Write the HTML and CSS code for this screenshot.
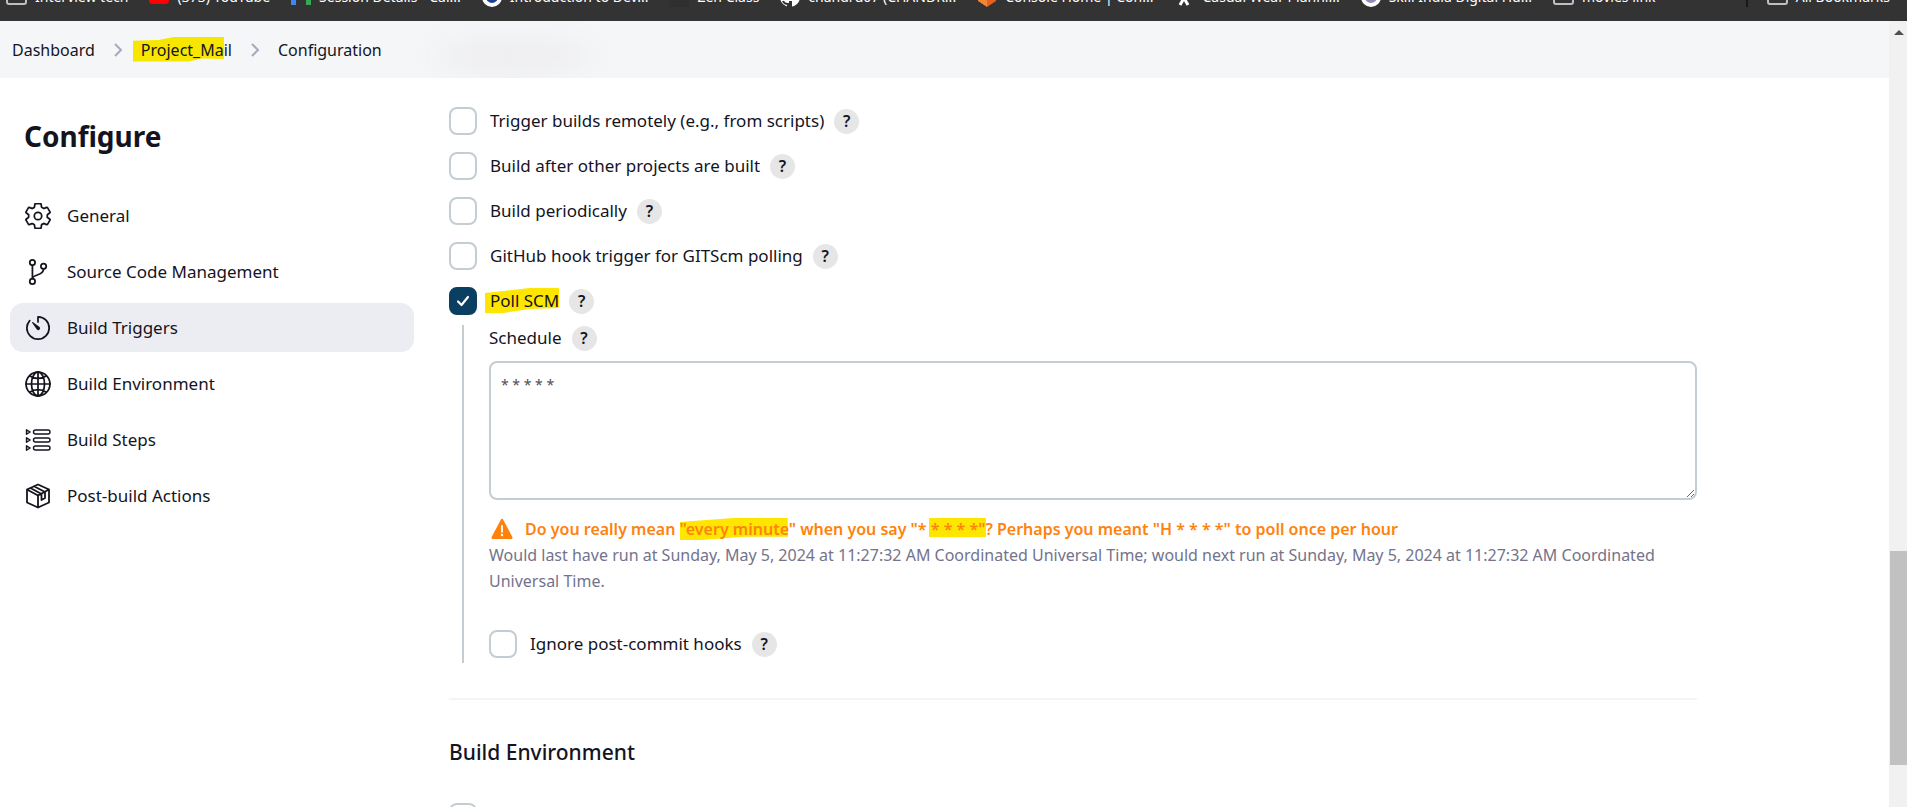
FILE: index.html
```html
<!DOCTYPE html>
<html lang="en">
<head>
<meta charset="utf-8">
<title>Project_Mail Config [Jenkins]</title>
<link rel="stylesheet" href="styles.css">
</head>
<body>
<nav class="bookmarks" aria-label="Bookmarks">
  <a class="bookmark" href="#"><span class="folder"></span>Interview tech</a>
  <a class="bookmark" href="#"><span class="fav fav-youtube"></span>(373) YouTube</a>
  <a class="bookmark" href="#"><span class="fav fav-meet"></span>Session Details - Cal...</a>
  <a class="bookmark" href="#"><span class="fav fav-round"></span>Introduction to Dev...</a>
  <a class="bookmark" href="#"><span class="fav fav-dark"></span>Zen Class</a>
  <a class="bookmark" href="#"><svg class="fav" viewBox="0 0 20 20"><circle cx="10" cy="10" r="10" fill="#fff"/><path d="M8 20v-3q-4 0-5-3" fill="none" stroke="#333" stroke-width="2"/><path d="M9 14h3v6h-3z" fill="#333"/></svg>chandru07 (CHANDR...</a>
  <a class="bookmark" href="#"><svg class="fav" viewBox="0 0 20 20"><path d="M1 5l9-5v20l-9-6z" fill="#f58536"/><path d="M19 5l-9-5v20l9-6z" fill="#e8601f"/></svg>Console Home | Con...</a>
  <a class="bookmark" href="#"><svg class="fav" viewBox="0 0 20 20"><path d="M6 18l4-7 4 7" fill="none" stroke="#fff" stroke-width="3"/></svg>Casual Wear Planni...</a>
  <a class="bookmark" href="#"><span class="fav fav-round fav-india"></span>Skill India Digital Hu...</a>
  <a class="bookmark" href="#"><span class="folder"></span>movies link</a>
  <a class="bookmark bookmark-all" href="#"><span class="folder"></span>All Bookmarks</a>
</nav>
<div class="viewport">
  <div class="page">
    <header class="crumbs">
      <a href="#">Dashboard</a>
      <svg class="chevron" viewBox="0 0 8 14"><path d="M1 1l6 6-6 6"/></svg>
      <a href="#" class="marked mark-project">Project_Mail</a>
      <svg class="chevron" viewBox="0 0 8 14"><path d="M1 1l6 6-6 6"/></svg>
      <span>Configuration</span>
      <span class="smudge"></span>
    </header>
    <div class="columns">
      <aside class="side">
        <h1>Configure</h1>
        <nav class="tasks" aria-label="Configure">
          <a class="task" href="#"><svg class="icon" viewBox="32 32 448 448"><circle cx="256" cy="256" r="64"/><path d="M416.39 256a154.34 154.34 0 01-1.53 20.79l45.21 35.46a10.81 10.81 0 012.45 13.75l-42.77 74a10.81 10.81 0 01-13.14 4.59l-44.9-18.08a16.11 16.11 0 00-15.17 1.75A164.48 164.48 0 01325 400.8a15.94 15.94 0 00-8.82 12.14l-6.73 47.89a11.08 11.08 0 01-10.68 9.17h-85.54a11.11 11.11 0 01-10.69-8.87l-6.72-47.82a16.07 16.07 0 00-9-12.22 155.3 155.3 0 01-21.46-12.57 16 16 0 00-15.11-1.71l-44.89 18.07a10.81 10.81 0 01-13.14-4.58l-42.77-74a10.8 10.8 0 012.45-13.75l38.21-30a16.05 16.05 0 006-14.08c-.36-4.17-.58-8.33-.58-12.5s.21-8.27.58-12.35a16 16 0 00-6.07-13.94l-38.19-30A10.81 10.81 0 0149.48 186l42.77-74a10.81 10.81 0 0113.14-4.59l44.9 18.08a16.11 16.11 0 0015.17-1.75A164.48 164.48 0 01187 111.2a15.94 15.94 0 008.82-12.14l6.73-47.89A11.08 11.08 0 01213.23 42h85.54a11.11 11.11 0 0110.69 8.87l6.72 47.82a16.07 16.07 0 009 12.22 155.3 155.3 0 0121.46 12.57 16 16 0 0015.11 1.71l44.89-18.07a10.81 10.81 0 0113.14 4.58l42.77 74a10.8 10.8 0 01-2.45 13.75l-38.21 30a16.05 16.05 0 00-6.05 14.08c.33 4.14.55 8.3.55 12.47z"/></svg>General</a>
          <a class="task" href="#"><svg class="icon" viewBox="32 32 448 448"><circle cx="160" cy="94" r="46"/><circle cx="160" cy="418" r="46"/><circle cx="352" cy="158" r="46"/><path d="M160 140v232M352 204c0 128-192 80-192 168"/></svg>Source Code Management</a>
          <a class="task task-active" href="#" aria-current="page"><svg class="icon" viewBox="32 32 448 448"><path d="M112.91 128A191.85 191.85 0 0064 254c-1.18 106.35 85.65 193.8 192 194 106.2.2 192-85.83 192-192 0-104.54-83.55-189.61-187.5-192a4.36 4.36 0 00-4.5 4.37V152"/><path class="solid" d="M233.38 278.63l-79-113a8.13 8.13 0 0111.32-11.32l113 79a32.5 32.5 0 01-37.25 53.26 33.21 33.21 0 01-8.07-7.94z"/></svg>Build Triggers</a>
          <a class="task" href="#"><svg class="icon" viewBox="32 32 448 448"><circle cx="256" cy="256" r="206"/><path d="M256 48c-58.07 0-112.67 93.13-112.67 208S197.93 464 256 464s112.67-93.13 112.67-208S314.07 48 256 48zM117.33 117.33c38.24 27.15 86.38 43.34 138.67 43.34s100.43-16.19 138.67-43.34M394.67 394.67c-38.24-27.15-86.38-43.34-138.67-43.34s-100.43 16.19-138.67 43.34M256 48v416M464 256H48"/></svg>Build Environment</a>
          <a class="task" href="#"><svg class="icon icon-fine" viewBox="0 0 26 26"><rect x="8.500" y="3" width="16.500" height="4" rx="2"/><rect x="8.500" y="11" width="16.500" height="4" rx="2"/><rect x="8.500" y="19" width="16.500" height="4" rx="2"/><path d="M1.500 2.800v4.400l3.700-2.200zM1.500 10.800v4.400l3.700-2.200zM1.500 18.800v4.400l3.700-2.200z"/></svg>Build Steps</a>
          <a class="task" href="#"><svg class="icon icon-box" viewBox="0 0 26 26"><path d="M13 1.500l11 5v13l-11 5-11-5v-13zM2 6.500l11 6 11-6M13 12.500v12M5.500 5l11 6M9 3.300l11 5.700M16.500 11v6l3.500-2v-6"/></svg>Post-build Actions</a>
        </nav>
      </aside>
      <main class="main">
        <form class="form">
          <div class="options">
            <div class="row"><input class="check" type="checkbox" id="remote"><label for="remote">Trigger builds remotely (e.g., from scripts)</label><button class="help" type="button">?</button></div>
            <div class="row"><input class="check" type="checkbox" id="after"><label for="after">Build after other projects are built</label><button class="help" type="button">?</button></div>
            <div class="row"><input class="check" type="checkbox" id="periodic"><label for="periodic">Build periodically</label><button class="help" type="button">?</button></div>
            <div class="row"><input class="check" type="checkbox" id="hook"><label for="hook">GitHub hook trigger for GITScm polling</label><button class="help" type="button">?</button></div>
            <div class="row"><input class="check" type="checkbox" id="poll" checked><label for="poll" class="marked mark-poll">Poll SCM</label><button class="help" type="button">?</button></div>
          </div>
          <div class="nested">
            <div class="field-head"><label for="schedule">Schedule</label><button class="help" type="button">?</button></div>
            <textarea class="schedule" id="schedule">* * * * *</textarea>
            <p class="warning"><svg class="warn-icon" viewBox="0 0 24 24"><path d="M12 2.500L22 21.500H2z" fill="#ff820d" stroke="#ff820d" stroke-width="3" stroke-linejoin="round"/><path d="M12 8.500v6.500" stroke="#fff" stroke-width="2" stroke-linecap="round"/><circle cx="12" cy="18.500" r="1.300" fill="#fff"/></svg><span>Do you really mean <span class="marked mark-minute">"every minute</span>" when you say "* <span class="marked mark-stars">* * * *"</span>? Perhaps you meant "H * * * *" to poll once per hour</span></p>
            <p class="detail">Would last have run at Sunday, May 5, 2024 at 11:27:32 AM Coordinated Universal Time; would next run at Sunday, May 5, 2024 at 11:27:32 AM Coordinated Universal Time.</p>
            <div class="row"><input class="check" type="checkbox" id="ignore"><label for="ignore">Ignore post-commit hooks</label><button class="help" type="button">?</button></div>
          </div>
          <section class="section">
            <h2>Build Environment</h2>
            <div class="row"><input class="check" type="checkbox" aria-label="Build Environment option"></div>
          </section>
        </form>
      </main>
    </div>
  </div>
  <div class="scrollbar" aria-hidden="true"><div class="arrow"></div><div class="thumb"></div></div>
</div>
</body>
</html>
```
FILE: styles.css
```css
* { box-sizing: border-box; }
body {
  margin: 0;
  height: 100vh;
  overflow: hidden;
  display: flex;
  flex-direction: column;
  background: #fff;
  color: #14141f;
  font: 17px/26px "Noto Sans", "Open Sans", sans-serif;
}
a { color: inherit; text-decoration: none; }
h1, h2, p { margin: 0; }

/* Browser bookmarks strip, cut off at the top of the window */
.bookmarks {
  flex: none;
  height: 21px;
  overflow: hidden;
  display: flex;
  align-items: flex-end;
  gap: 21px;
  padding: 0 17px 14px 6px;
  background: #333;
  color: #fff;
  font-size: 14px;
  line-height: 20px;
}
.bookmark { display: flex; align-items: center; gap: 8px; white-space: nowrap; height: 20px; flex: none; }
.bookmark-all { margin-left: auto; }
.bookmark-all::before { content: ""; width: 2px; height: 20px; background: #181818; margin-right: 11px; }
.folder { width: 21px; height: 16px; border: 2px solid #c3bdc3; border-radius: 3px; }
.fav { width: 20px; height: 20px; flex: none; }
.fav-youtube { background: #f00; height: 14px; border-radius: 4px; }
.fav-meet { border: solid; border-width: 0 5px; border-color: #333 #34a853 #333 #4285f4; height: 16px; }
.fav-round { border-radius: 50%; background: #1d3f9c; border: 4px solid #fff; }
.fav-india { background: #8c8cb4; }
.fav-dark { background: #2f2f2f; }

.viewport { flex: 1; min-height: 0; display: flex; }
.page { flex: 1; min-width: 0; overflow: hidden; }

.crumbs {
  display: flex;
  align-items: center;
  height: 57px;
  overflow: hidden;
  padding: 0 12px;
  gap: 18px;
  background: #f5f6f8;
  font-size: 16px;
}
.chevron { width: 10px; height: 14px; fill: none; stroke: #a9a9bd; stroke-width: 2; }
.smudge { width: 150px; height: 36px; margin: 12px 0 0 38px; border-radius: 50%; background: #eeeef0; filter: blur(12px); }

/* Highlighter strokes lying behind words */
.marked { position: relative; z-index: 0; }
.marked::before { content: ""; position: absolute; z-index: -1; background: #ffe600; }
.mark-project::before { inset: 0 8px 1px -8px; clip-path: polygon(0 17%, 28% 14%, 45% 2%, 100% 0, 100% 90%, 75% 88%, 62% 100%, 0 100%); background: #f7e600; }
.mark-poll::before { inset: 0 0 1px -5px; clip-path: polygon(0 20%, 60% 0, 100% 0, 100% 80%, 60% 84%, 25% 100%, 0 100%); }
.mark-minute::before { inset: 0 1px 0 0; clip-path: polygon(0 18%, 50% 0, 100% 0, 100% 85%, 60% 85%, 20% 100%, 0 100%); }
.mark-stars::before { inset: 0 -1px 3px -2px; }

.columns { display: flex; gap: 35px; }
.side { flex: none; width: 414px; padding: 36px 0 0 10px; }
h1 { padding-left: 14px; font-size: 28px; line-height: 44px; font-weight: 700; }
.tasks { display: flex; flex-direction: column; gap: 7px; margin-top: 33px; }
.task { display: flex; align-items: center; gap: 16px; height: 49px; padding: 0 15px; border-radius: 13px; }
.task-active { background: #ecedf3; }
.icon { width: 26px; height: 26px; flex: none; fill: none; stroke: currentColor; stroke-width: 30; stroke-linecap: round; stroke-linejoin: round; }
.icon .solid { fill: currentColor; stroke: none; }
.icon-fine { stroke-width: 1.4; }
.icon-box { stroke-width: 1.8; }

.main { flex: 1; min-width: 0; padding: 29px 0 0; }
.form { max-width: 1248px; }
.options { display: flex; flex-direction: column; gap: 17px; }
.row { display: flex; align-items: center; height: 28px; }
.row label { margin-left: 13px; }
.check {
  appearance: none;
  flex: none;
  width: 28px;
  height: 28px;
  margin: 0;
  border: 2px solid #c3cdd2;
  border-radius: 8px;
  background: #fff;
}
.check:checked {
  border-color: #0b3f61;
  background: #0b3f61 url("data:image/svg+xml,%3Csvg xmlns='http://www.w3.org/2000/svg' viewBox='0 0 24 24'%3E%3Cpath d='M7 12.500l3.500 3.500 6.500-8' fill='none' stroke='white' stroke-width='2.200' stroke-linecap='round' stroke-linejoin='round'/%3E%3C/svg%3E") center / 24px no-repeat;
}
.help {
  flex: none;
  width: 25px;
  height: 25px;
  margin: 0 0 0 10px;
  padding: 0;
  border: 0;
  border-radius: 50%;
  background: #e6e6e6;
  color: #14141f;
  font: 600 16px/25px "Noto Sans", sans-serif;
}
.nested { margin: 10px 0 0 13px; padding: 0 0 5px 25px; border-left: 2px solid #c3cdd2; }
.field-head { display: flex; align-items: center; height: 26px; }
.schedule {
  display: block;
  width: 100%;
  height: 139px;
  margin: 10px 0 0;
  padding: 9px 10px;
  border: 2px solid #c3cdd2;
  border-radius: 8px;
  background: #fff;
  color: #4d4d57;
  font: 14px/26px "Noto Sans", sans-serif;
  resize: vertical;
}
.warning { display: flex; align-items: center; gap: 12px; margin-top: 16px; padding-left: 2px; color: #ff820d; font-size: 16px; font-weight: 600; }
.warn-icon { flex: none; width: 22px; height: 22px; }
.detail { color: #73738c; font-size: 16px; }
.nested .row { margin-top: 36px; }
.section { margin-top: 35px; border-top: 2px solid #f3f3f8; }
h2 { margin: 37px 0 36px; font-size: 21px; line-height: 30px; font-weight: 500; }

.scrollbar { flex: none; width: 18px; display: flex; flex-direction: column; align-items: center; background: #f1f1f1; padding: 9px 0 0 1px; }
.arrow { border: solid transparent; border-width: 0 5px 5px; border-bottom-color: #505050; }
.thumb { width: 17px; height: 214px; margin-top: 516px; background: #c1c1c1; }
```
